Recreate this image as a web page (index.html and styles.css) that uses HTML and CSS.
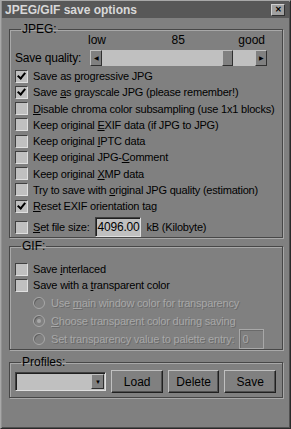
FILE: index.html
```html
<!DOCTYPE html>
<html lang="en">
<head>
    <meta charset="UTF-8">
    <title>JPEG/GIF save options</title>
    <link rel="stylesheet" href="styles.css">
</head>
<body>
    <div class="window">
        <div class="titlebar">
            <span class="title">JPEG/GIF save options</span>
            <span class="close">&#x2715;</span>
        </div>

        <fieldset class="group jpeg">
            <legend>JPEG:</legend>
            <div class="scale">
                <span class="low">low</span>
                <span class="mid">85</span>
                <span class="high">good</span>
            </div>
            <div class="quality">
                <span class="quality-label">Save quality:</span>
                <div class="slider">
                    <span class="arrow left">&#9664;</span>
                    <span class="track">
                        <span class="thumb"></span>
                    </span>
                    <span class="arrow right">&#9654;</span>
                </div>
            </div>
            <div class="checks">
                <label class="check"><span class="box on"></span><span>Save as <u>p</u>rogressive JPG</span></label>
                <label class="check"><span class="box on"></span><span>Save <u>a</u>s grayscale JPG (please remember!)</span></label>
                <label class="check"><span class="box"></span><span><u>D</u>isable chroma color subsampling (use 1x1 blocks)</span></label>
                <label class="check"><span class="box"></span><span>Keep original <u>E</u>XIF data (if JPG to JPG)</span></label>
                <label class="check"><span class="box"></span><span>Keep original <u>I</u>PTC data</span></label>
                <label class="check"><span class="box"></span><span>Keep original JPG-<u>C</u>omment</span></label>
                <label class="check"><span class="box"></span><span>Keep original <u>X</u>MP data</span></label>
                <label class="check"><span class="box"></span><span>Try to save with <u>o</u>riginal JPG quality (estimation)</span></label>
                <label class="check"><span class="box on"></span><span><u>R</u>eset EXIF orientation tag</span></label>
                <div class="check size-row">
                    <span class="box"></span><span><u>S</u>et file size:</span>
                    <span class="field size">4096.00</span>
                    <span class="unit">kB (Kilobyte)</span>
                </div>
            </div>
        </fieldset>

        <fieldset class="group gif">
            <legend>GIF:</legend>
            <div class="checks">
                <label class="check"><span class="box"></span><span>Save <u>i</u>nterlaced</span></label>
                <label class="check"><span class="box"></span><span>Save with a <u>t</u>ransparent color</span></label>
                <label class="radio disabled"><span class="dot"></span><span>Use <u>m</u>ain window color for transparency</span></label>
                <label class="radio disabled"><span class="dot on"></span><span><u>C</u>hoose transparent color during saving</span></label>
                <div class="radio disabled">
                    <span class="dot"></span><span>Set transparency value to palette entry:</span>
                    <span class="field entry">0</span>
                </div>
            </div>
        </fieldset>

        <fieldset class="group profiles">
            <legend>Profiles:</legend>
            <div class="profile-row">
                <div class="combo">
                    <span class="combo-text"></span>
                    <span class="combo-btn">&#9660;</span>
                </div>
                <button>Load</button>
                <button>Delete</button>
                <button>Save</button>
            </div>
        </fieldset>
    </div>
</body>
</html>
```

FILE: styles.css
```css
body {
    margin: 0;
    background-color: #808080;
    font-family: "Liberation Sans", Arial, sans-serif;
    font-size: 11px;
    color: #000;
}
.window {
    width: 291px;
    height: 429px;
    box-sizing: border-box;
    border-left: 1px solid #a8a8a8;
    border-top: 1px solid #a8a8a8;
    border-right: 1px solid #2a2a2a;
    border-bottom: 1px solid #2a2a2a;
    box-shadow: inset 1px 1px 0 #909090, inset -1px -1px 0 #505050;
    background-color: #808080;
    padding: 0 7px 0 8px;
}
.titlebar {
    height: 17px;
    margin: 0 -6px 0 -7px;
    padding: 0 4px 0 3px;
    background-color: #585858;
    display: flex;
    align-items: center;
    justify-content: space-between;
}
.title {
    font-family: "Liberation Sans", Arial, sans-serif;
    font-weight: bold;
    font-size: 12px;
    color: #d8d8d8;
    letter-spacing: 0;
}
.close {
    width: 12px;
    height: 10px;
    background-color: #a0a0a0;
    border-top: 1px solid #d0d0d0;
    border-left: 1px solid #d0d0d0;
    border-right: 1px solid #303030;
    border-bottom: 1px solid #303030;
    font-size: 8px;
    font-weight: bold;
    line-height: 10px;
    text-align: center;
    color: #000;
}

/* group boxes */
.group {
    margin: 5px 0 0 0;
    padding: 0 6px 4px 5px;
    border: 1px solid #474747;
    box-shadow: 1px 1px 0 #a8a8a8, inset 1px 1px 0 #a8a8a8;
    min-width: 0;
    box-sizing: border-box;
}
.group legend {
    padding: 0 1px;
    margin-left: 6px;
    line-height: 13px;
    font-size: 12px;
}
.jpeg {
    height: 215px;
}
.gif {
    margin-top: 2px;
    height: 110px;
}
.profiles {
    margin-top: 6px;
    height: 42px;
}

/* quality slider */
.scale {
    height: 13px;
    margin-top: -2px;
    margin-left: 73px;
    margin-right: 11px;
    font-size: 12px;
    line-height: 13px;
    display: flex;
    justify-content: space-between;
}
.scale .mid {
    margin-left: 12px;
}
.quality {
    display: flex;
    align-items: center;
    margin-top: 2px;
    height: 17px;
}
.quality-label {
    width: 75px;
    font-size: 12px;
    letter-spacing: -0.2px;
}
.slider {
    display: flex;
    width: 177px;
    height: 16px;
}
.arrow {
    width: 10px;
    height: 14px;
    background-color: #808080;
    border-top: 1px solid #c0c0c0;
    border-left: 1px solid #c0c0c0;
    border-right: 1px solid #303030;
    border-bottom: 1px solid #303030;
    font-size: 6px;
    line-height: 14px;
    text-align: center;
    color: #000;
}
.track {
    flex: 1;
    position: relative;
    background-color: #c0c0c0;
}
.thumb {
    position: absolute;
    left: 120px;
    top: 0;
    width: 9px;
    height: 14px;
    background-color: #808080;
    border-top: 1px solid #c0c0c0;
    border-left: 1px solid #c0c0c0;
    border-right: 1px solid #303030;
    border-bottom: 1px solid #303030;
}

/* checkboxes and radios */
.checks {
    display: flex;
    flex-direction: column;
    margin-top: 2px;
}
.gif .checks {
    margin-top: 8px;
}
.check, .radio {
    display: flex;
    align-items: center;
    height: 16.25px;
    font-size: 11px;
    letter-spacing: -0.2px;
    white-space: nowrap;
}
.box {
    width: 11px;
    height: 11px;
    margin-right: 5px;
    background-color: #c0c0c0;
    border-top: 1px solid #404040;
    border-left: 1px solid #404040;
    border-right: 1px solid #e0e0e0;
    border-bottom: 1px solid #e0e0e0;
    position: relative;
    flex: none;
}
.box.on::after {
    content: "";
    position: absolute;
    left: 3px;
    top: 0px;
    width: 3px;
    height: 6px;
    border-right: 2px solid #000;
    border-bottom: 2px solid #000;
    transform: rotate(40deg);
}
.size-row {
    height: 22px;
    margin-top: 2px;
}
.field {
    background-color: #c0c0c0;
    border-top: 1px solid #404040;
    border-left: 1px solid #404040;
    border-right: 1px solid #e0e0e0;
    border-bottom: 1px solid #e0e0e0;
    box-shadow: inset 1px 1px 0 #202020;
    height: 18px;
    line-height: 18px;
    box-sizing: border-box;
    padding: 0 2px;
}
.size {
    width: 46px;
    margin-left: 5px;
    margin-right: 6px;
    height: 20px;
    line-height: 19px;
    font-size: 12px;
}
.radio {
    margin-left: 18px;
    height: 18px;
}
.disabled {
    color: #a8a8a8;
    text-shadow: 1px 1px 0 #6a6a6a;
}
.dot {
    width: 10px;
    height: 10px;
    margin-right: 6px;
    border-radius: 50%;
    border: 1px solid #a8a8a8;
    box-shadow: inset 1px 1px 0 #606060;
    position: relative;
    flex: none;
}
.dot.on::after {
    content: "";
    position: absolute;
    left: 3px;
    top: 3px;
    width: 4px;
    height: 4px;
    border-radius: 50%;
    background-color: #a8a8a8;
}
.entry {
    margin-left: 5px;
    width: 25px;
    height: 20px;
    background-color: #808080;
    border-color: #a8a8a8;
    box-shadow: inset 1px 1px 0 #6a6a6a;
    color: #a8a8a8;
}

/* profiles */
.profile-row {
    display: flex;
    align-items: center;
    gap: 4px;
    margin-top: 1px;
}
.combo {
    display: flex;
    width: 94px;
    height: 19px;
    box-sizing: border-box;
    background-color: #c0c0c0;
    border-top: 1px solid #404040;
    border-left: 1px solid #404040;
    border-right: 1px solid #e0e0e0;
    border-bottom: 1px solid #e0e0e0;
    box-shadow: inset 1px 1px 0 #202020;
    padding: 1px;
}
.combo-text {
    flex: 1;
}
.combo-btn {
    width: 11px;
    background-color: #808080;
    border-top: 1px solid #c0c0c0;
    border-left: 1px solid #c0c0c0;
    border-right: 1px solid #303030;
    border-bottom: 1px solid #303030;
    font-size: 6px;
    line-height: 14px;
    text-align: center;
}
button {
    width: 53px;
    height: 23px;
    margin-left: 1px;
    background-color: #808080;
    font-family: "Liberation Sans", Arial, sans-serif;
    font-size: 12px;
    color: #000;
    border-top: 1px solid #c0c0c0;
    border-left: 1px solid #c0c0c0;
    border-right: 1px solid #202020;
    border-bottom: 1px solid #202020;
    box-shadow: inset -1px -1px 0 #505050;
    padding: 0;
}
```
